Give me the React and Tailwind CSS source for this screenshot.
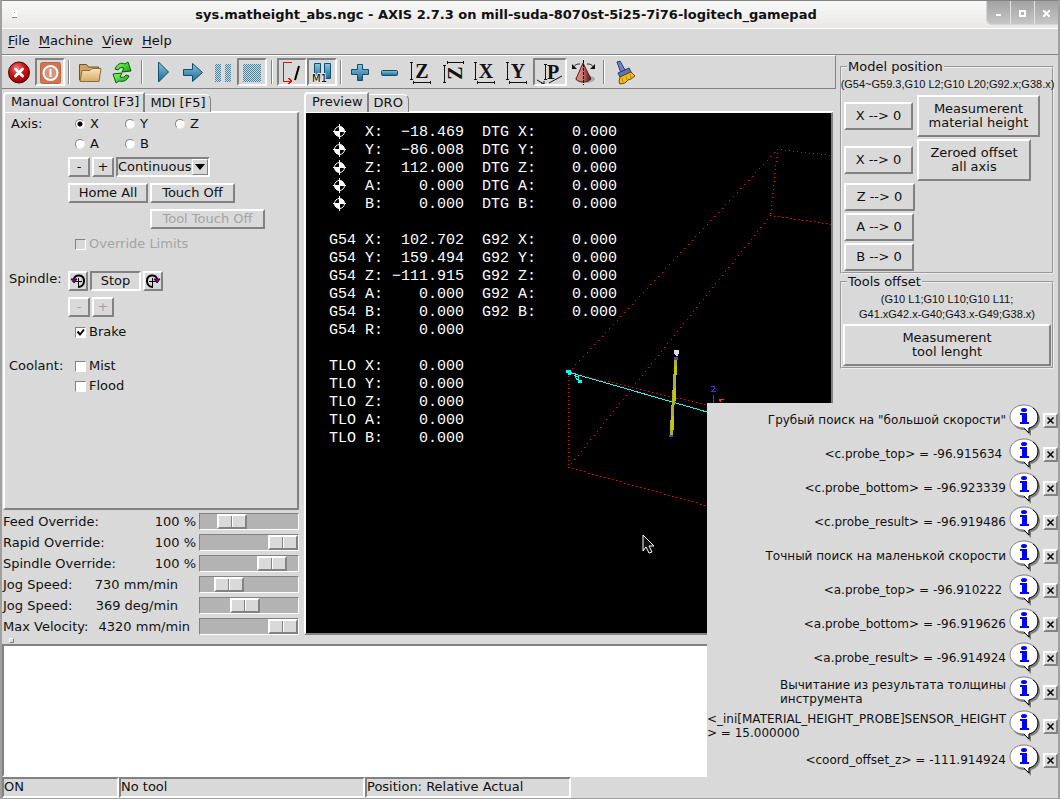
import { useState } from 'react'

const raisedColors = 'border-t-white border-l-white border-r-[#828282] border-b-[#828282]'
const raised = `border-2 ${raisedColors}`
const sunken = 'border-2 border-t-[#828282] border-l-[#828282] border-r-white border-b-white'

function Gradients() {
  return (
    <svg className="absolute size-0" aria-hidden="true">
      <defs>
        <linearGradient id="blue" x1="0" y1="0" x2="0" y2="1">
          <stop offset="0" stopColor="#8ec3dc" />
          <stop offset="1" stopColor="#176a92" />
        </linearGradient>
        <radialGradient id="red" cx="0.4" cy="0.3" r="0.7">
          <stop offset="0" stopColor="#f08080" />
          <stop offset="0.5" stopColor="#d01515" />
          <stop offset="1" stopColor="#960000" />
        </radialGradient>
        <linearGradient id="folder" x1="0" y1="0" x2="0" y2="1">
          <stop offset="0" stopColor="#f8e3b8" />
          <stop offset="1" stopColor="#d6ac68" />
        </linearGradient>
        <linearGradient id="green" x1="0" y1="0" x2="1" y2="1">
          <stop offset="0" stopColor="#8cff6a" />
          <stop offset="1" stopColor="#0aa80a" />
        </linearGradient>
        <linearGradient id="cone" x1="0" y1="0" x2="1" y2="0">
          <stop offset="0" stopColor="#e88d84" />
          <stop offset="0.4" stopColor="#d8776e" />
          <stop offset="1" stopColor="#3c1512" />
        </linearGradient>
        <pattern id="dither" width="2" height="2" patternUnits="userSpaceOnUse">
          <rect width="2" height="2" fill="#d4dde1" />
          <rect width="1" height="1" fill="#3a82a6" />
          <rect x="1" y="1" width="1" height="1" fill="#3a82a6" />
        </pattern>
      </defs>
    </svg>
  )
}

function Icon({ children }) {
  return (
    <svg width="26" height="26" viewBox="0 0 26 26" fill="none" className="shrink-0" aria-hidden="true">
      {children}
    </svg>
  )
}

function ViewLetter({ letter }) {
  return (
    <Icon>
      <path d="M3.500 3v18M2 3.500h3M2 20.500h3M5 23.500h18M5.500 22v3M22.500 22v3" stroke="#111" shapeRendering="crispEdges" />
      <text x="14" y="19" textAnchor="middle" fontFamily="Liberation Serif, serif" fontSize="20" fontWeight="700" fill="#111">
        {letter}
      </text>
    </Icon>
  )
}

const icons = {
  estop: (
    <Icon>
      <circle cx="13" cy="13.500" r="10.500" fill="url(#red)" stroke="#3d0000" />
      <path d="M9.500 10l7 7M16.500 10l-7 7" stroke="#fff" strokeWidth="3" strokeLinecap="round" />
    </Icon>
  ),
  power: (
    <Icon>
      <rect x="3.500" y="3.500" width="20" height="21" rx="2" fill="#d17452" stroke="#c0633f" />
      <circle cx="13.500" cy="14" r="7" fill="#dc9379" stroke="#fff" strokeWidth="2" />
      <path d="M13.500 10v8" stroke="#fff" strokeWidth="2" />
    </Icon>
  ),
  open: (
    <Icon>
      <path d="M3.500 21V5.500h7l2 2.500h10v13z" fill="#cba565" stroke="#6b5529" />
      <path d="M4 22.500l2-11h8l2-2h9l-2 13z" fill="url(#folder)" stroke="#8a6c38" />
    </Icon>
  ),
  reload: (
    <Icon>
      <path d="M7 10C9 5 13 3 17 5l3-2 3 9-9 1 2-4c-3-1-5 0-6 2z" fill="url(#green)" stroke="#0b5a0b" />
      <path d="M21 17c-2 5-6 6-10 5l-3 2-3-9 9-1-2 4c3 1 5 0 6-2z" fill="url(#green)" stroke="#0b5a0b" />
    </Icon>
  ),
  run: (
    <Icon>
      <path d="M9.500 3v20l10-10z" fill="url(#blue)" stroke="#114d6e" />
    </Icon>
  ),
  step: (
    <Icon>
      <path d="M4.500 10.500h9v-6l10 9-10 9v-6h-9z" fill="url(#blue)" stroke="#114d6e" />
    </Icon>
  ),
  pause: (
    <Icon>
      <path d="M6 5h6v18H6zM16 5h6v18h-6z" fill="url(#dither)" />
    </Icon>
  ),
  stop: (
    <Icon>
      <path d="M4 5h18v18H4z" fill="url(#dither)" />
    </Icon>
  ),
  skipLines: (
    <Icon>
      <path d="M13 3.500H4.500v18.500h8M9.500 19l3 3-3 3" stroke="#f00" shapeRendering="crispEdges" />
      <path d="M16 21l4-14" stroke="#000" strokeWidth="2" />
    </Icon>
  ),
  optionalStop: (
    <Icon>
      <path d="M5.500 4.500h6v15h-6zM15.500 4.500h6v15h-6z" fill="url(#blue)" stroke="#114d6e" />
      <text x="3" y="23" fontFamily="DejaVu Sans, sans-serif" fontSize="10" fill="#000" stroke="#e8e8e8" strokeWidth="2" paintOrder="stroke">
        M1
      </text>
    </Icon>
  ),
  zoomIn: (
    <Icon>
      <path d="M10.500 5.500h5v5h6v5h-6v6h-5v-6h-6v-5h6z" fill="url(#blue)" stroke="#114d6e" strokeLinejoin="round" />
    </Icon>
  ),
  zoomOut: (
    <Icon>
      <rect x="4.500" y="11.500" width="16" height="5" rx="1" fill="url(#blue)" stroke="#114d6e" />
    </Icon>
  ),
  viewZ: <ViewLetter letter="Z" />,
  viewZ2: (
    <Icon>
      <path d="M4.500 6v18M3 6.500h3M3 23.500h3M7 3.500h17M7.500 2v3M23.500 2v3" stroke="#111" shapeRendering="crispEdges" />
      <text x="-14" y="22" transform="rotate(-90)" textAnchor="middle" fontFamily="Liberation Serif, serif" fontSize="20" fontWeight="700" fill="#111">
        Z
      </text>
    </Icon>
  ),
  viewX: <ViewLetter letter="X" />,
  viewY: <ViewLetter letter="Y" />,
  viewP: (
    <Icon>
      <path d="M8.500 5v15M7 5.500h3M7 20.500h3" stroke="#111" shapeRendering="crispEdges" />
      <path d="M0 21l7 4M4 25h3v-3M12 24l13-7" stroke="#111" />
      <text x="16" y="20" textAnchor="middle" fontFamily="Liberation Serif, serif" fontSize="20" fontWeight="700" fill="#111">
        P
      </text>
    </Icon>
  ),
  rotate: (
    <Icon>
      <ellipse cx="15" cy="20" rx="10" ry="4" fill="#aaa" />
      <path d="M13 4L6 20c3 4 12 4 15 0z" fill="url(#cone)" stroke="#5a2420" />
      <path d="M13.500 1v25" stroke="#000" strokeDasharray="3 1" shapeRendering="crispEdges" />
      <path d="M3 9c2-4 5-4 7-4M24 9c-2-4-5-4-7-4" stroke="#111" />
      <path d="M2 5v5h5zM25 5v5h-5z" fill="#111" />
    </Icon>
  ),
  clear: (
    <Icon>
      <path d="M5 3l3-1 5 9-4 3z" fill="#6f86cf" stroke="#27366b" />
      <path d="M6 14l11-5 2 4-11 5z" fill="#5b72bd" stroke="#27366b" />
      <path d="M8 18l11-5 4 4-4 3-3 1-3 3-5 1-1-2z" fill="#f4bd1a" stroke="#6b4b06" />
      <path d="M10 19l1 4M14 17l1 4M18 15l1 4" stroke="#b98508" />
    </Icon>
  ),
}

const tools = [
  { icon: 'estop', label: 'Emergency stop', width: 'w-8' },
  { icon: 'power', label: 'Machine power', width: 'w-[30px]', pressed: true },
  { sep: 'w-2' },
  { icon: 'open', label: 'Open file', width: 'w-8' },
  { icon: 'reload', label: 'Reload file', width: 'w-8' },
  { sep: 'w-[10px]' },
  { icon: 'run', label: 'Run', width: 'w-[30px]' },
  { icon: 'step', label: 'Step', width: 'w-[30px]' },
  { icon: 'pause', label: 'Pause', width: 'w-[30px]' },
  { icon: 'stop', label: 'Stop program', width: 'w-[30px]', pressed: true },
  { sep: 'w-[10px]' },
  { icon: 'skipLines', label: 'Skip lines', width: 'w-[30px]', pressed: true },
  { icon: 'optionalStop', label: 'Optional stop', width: 'w-[30px]', pressed: true },
  { sep: 'w-2' },
  { icon: 'zoomIn', label: 'Zoom in', width: 'w-[30px]' },
  { icon: 'zoomOut', label: 'Zoom out', width: 'w-[30px]' },
  { icon: 'viewZ', label: 'Top view', width: 'w-8' },
  { icon: 'viewZ2', label: 'Rotated top view', width: 'w-8' },
  { icon: 'viewX', label: 'Side view', width: 'w-8' },
  { icon: 'viewY', label: 'Front view', width: 'w-8' },
  { icon: 'viewP', label: 'Perspective view', width: 'w-[34px]', pressed: true },
  { icon: 'rotate', label: 'Rotate', width: 'w-8' },
  { sep: 'w-[10px]' },
  { icon: 'clear', label: 'Clear plot', width: 'w-8' },
]

function Toolbar() {
  return (
    <div className="flex h-[34px] shrink-0 items-center border-t border-r border-b border-t-white border-r-[#828282] border-b-[#828282] pl-px">
      {tools.map((t, i) =>
        t.sep ? (
          <div key={i} className={`flex h-6 shrink-0 justify-center ${t.sep}`}>
            <div className="w-[2px] border-l border-r border-l-[#828282] border-r-white" />
          </div>
        ) : (
          <button
            key={i}
            aria-label={t.label}
            className={`flex h-7 shrink-0 items-center justify-center overflow-hidden ${t.width} ${t.pressed ? sunken : ''}`}
          >
            {icons[t.icon]}
          </button>
        )
      )}
    </div>
  )
}

function Button({ children, className = '', ...props }) {
  return (
    <button className={`flex items-center justify-center disabled:text-[#a3a3a3] ${raised} ${className}`} {...props}>
      {children}
    </button>
  )
}

function Check({ label, ...props }) {
  return (
    <label className={`flex h-5 items-center gap-[3px] ${props.disabled ? 'text-[#a3a3a3]' : ''}`}>
      <span className="relative flex">
        <input
          type="checkbox"
          className="peer size-[11px] appearance-none border border-t-[#828282] border-l-[#828282] border-r-white border-b-white bg-white disabled:bg-[#d9d9d9]"
          {...props}
        />
        <svg className="pointer-events-none absolute inset-0 hidden peer-checked:block" width="11" height="11" fill="none" aria-hidden="true">
          <path d="M2.500 4.500l2.500 3 4-5" stroke="#000" strokeWidth="2" />
        </svg>
      </span>
      {label}
    </label>
  )
}

function AxisRadios() {
  const [axis, setAxis] = useState('X')
  return (
    <div className="grid grid-cols-[50px_50px_50px] pl-[7px]">
      {['X', 'Y', 'Z', 'A', 'B'].map(a => (
        <label key={a} className="flex h-5 items-center gap-[5px]">
          <input
            type="radio"
            name="axis"
            checked={axis === a}
            onChange={() => setAxis(a)}
            className="size-[10px] appearance-none rounded-full border border-t-[#828282] border-l-[#828282] border-r-[#eeeeee] border-b-[#eeeeee] bg-white checked:bg-[radial-gradient(circle,#000_2px,#fff_3px)]"
          />
          {a}
        </label>
      ))}
    </div>
  )
}

function SpindleIcon({ flip }) {
  return (
    <svg width="16" height="16" viewBox="0 0 16 16" fill="none" className={flip ? '-scale-x-100' : ''} aria-hidden="true">
      <path d="M4 6c1-5 10-5 10 2 0 4-3 6-6 6" stroke="#000" strokeWidth="2" />
      <path d="M8.500 5v8M5 8.500h7" stroke="#000" shapeRendering="crispEdges" />
      <path d="M1 6h6L4 10z" fill="#800080" stroke="#40003f" />
    </svg>
  )
}

function Tabs({ tabs }) {
  return (
    <div role="tablist" className="flex h-5 shrink-0 items-end">
      <button
        role="tab"
        aria-selected="true"
        className="z-10 flex h-5 items-center rounded-tl border-t-2 border-l-2 border-r-2 border-t-white border-l-white border-r-[#828282] pr-[4px] pb-[3px] pl-[6px]"
      >
        {tabs[0]}
      </button>
      <button
        role="tab"
        aria-selected="false"
        className="flex h-[18px] items-center rounded-tr-md border-t border-r border-t-white border-r-[#828282] px-[5px] pb-px"
      >
        {tabs[1]}
      </button>
      <div className="h-px flex-1 bg-white" />
    </div>
  )
}

function ManualControl() {
  return (
    <div className={`flex flex-1 flex-col ${raised} border-t pt-px pl-[3px]`}>
      <div className="flex">
        <span className="w-[60px] pl-[3px] leading-5">Axis:</span>
        <div className="flex flex-col items-start">
          <AxisRadios />
          <div className="mt-[3px] flex h-5 gap-[2px]">
            <Button className="w-[22px]">-</Button>
            <Button className="w-[22px]">+</Button>
            <div className={`relative flex w-[94px] ${sunken}`}>
              <select aria-label="Jog increment" className="w-full appearance-none leading-4 outline-none">
                <option>Continuous</option>
              </select>
              <span className={`pointer-events-none absolute inset-y-0 right-0 flex w-4 items-center justify-center border bg-[#d9d9d9] ${raisedColors}`}>
                <svg width="10" height="6" aria-hidden="true">
                  <path d="M0 0h10L5 6z" fill="#000" />
                </svg>
              </span>
            </div>
          </div>
          <div className="mt-[6px] grid grid-cols-[auto_auto_auto] justify-start gap-x-[2px] gap-y-[6px]">
            <Button className="h-5 w-20">Home All</Button>
            <Button className="h-5 w-[85px]">Touch Off</Button>
            <Button className="col-span-2 col-start-2 h-5 w-[115px]" disabled>
              Tool Touch Off
            </Button>
          </div>
          <div className="mt-[5px] pl-[7px]">
            <Check label="Override Limits" disabled />
          </div>
        </div>
      </div>
      <div className="mt-[17px] flex">
        <span className="w-[60px] pl-px leading-4">Spindle:</span>
        <div>
          <div className="flex h-5 gap-[2px]">
            <Button className="w-5" aria-label="Spindle counterclockwise">
              <SpindleIcon />
            </Button>
            <button className={`w-[51px] leading-4 ${sunken}`}>Stop</button>
            <Button className="w-5" aria-label="Spindle clockwise">
              <SpindleIcon flip />
            </Button>
          </div>
          <div className="mt-[6px] flex h-5 gap-[2px]">
            <Button className="w-[22px]" disabled>-</Button>
            <Button className="w-[22px]" disabled>+</Button>
          </div>
          <div className="mt-[5px] pl-[7px]">
            <Check label="Brake" defaultChecked />
          </div>
        </div>
      </div>
      <div className="mt-[14px] flex">
        <span className="w-[60px] pl-px leading-5">Coolant:</span>
        <div className="pl-[7px]">
          <Check label="Mist" />
          <Check label="Flood" />
        </div>
      </div>
    </div>
  )
}

const overrides = [
  { id: 'feed', label: 'Feed Override:', value: '100 %', pos: 25, align: 'text-right' },
  { id: 'rapid', label: 'Rapid Override:', value: '100 %', pos: 100, align: 'text-right' },
  { id: 'spindle', label: 'Spindle Override:', value: '100 %', pos: 84, align: 'text-right' },
  { id: 'jog-linear', label: 'Jog Speed:', value: '730 mm/min', pos: 21, align: 'pr-[18px] text-right' },
  { id: 'jog-angular', label: 'Jog Speed:', value: '369 deg/min', pos: 44, align: 'pr-[18px] text-right' },
  { id: 'velocity', label: 'Max Velocity:', value: '4320 mm/min', pos: 100, align: 'pr-[6px] text-right' },
]

function Overrides() {
  return (
    <div className="flex flex-col pt-px">
      {overrides.map(o => (
        <div key={o.id} className="flex h-[21px] items-center">
          <label htmlFor={o.id} className="whitespace-nowrap">{o.label}</label>
          <span className={`flex-1 whitespace-nowrap ${o.align}`}>{o.value}</span>
          <input
            id={o.id}
            type="range"
            defaultValue={o.pos}
            className="ml-[3px] h-[17px] w-[100px] appearance-none border border-t-[#828282] border-l-[#828282] border-r-white border-b-white bg-[#b3b3b3] [&::-webkit-slider-thumb]:h-[15px] [&::-webkit-slider-thumb]:w-[30px] [&::-webkit-slider-thumb]:appearance-none [&::-webkit-slider-thumb]:border-2 [&::-webkit-slider-thumb]:border-t-white [&::-webkit-slider-thumb]:border-r-[#828282] [&::-webkit-slider-thumb]:border-b-[#828282] [&::-webkit-slider-thumb]:border-l-white [&::-webkit-slider-thumb]:bg-[linear-gradient(90deg,#d9d9d9_12px,#828282_12px,#828282_13px,#fff_13px,#fff_14px,#d9d9d9_14px)]"
          />
        </div>
      ))}
    </div>
  )
}

const readout = [
  ['home', 'X', '−18.469', 'DTG', 'X'],
  ['home', 'Y', '−86.008', 'DTG', 'Y'],
  ['home', 'Z', '112.000', 'DTG', 'Z'],
  ['home', 'A', '0.000', 'DTG', 'A'],
  ['home', 'B', '0.000', 'DTG', 'B'],
  null,
  ['G54', 'X', '102.702', 'G92', 'X'],
  ['G54', 'Y', '159.494', 'G92', 'Y'],
  ['G54', 'Z', '−111.915', 'G92', 'Z'],
  ['G54', 'A', '0.000', 'G92', 'A'],
  ['G54', 'B', '0.000', 'G92', 'B'],
  ['G54', 'R', '0.000'],
  null,
  ['TLO', 'X', '0.000'],
  ['TLO', 'Y', '0.000'],
  ['TLO', 'Z', '0.000'],
  ['TLO', 'A', '0.000'],
  ['TLO', 'B', '0.000'],
]

function HomedIcon() {
  return (
    <svg width="13" height="15" viewBox="0 0 13 15" fill="none" className="ml-1 block" aria-hidden="true">
      <circle cx="6.500" cy="7.500" r="5" stroke="#fff" />
      <path d="M6.500 7.500V2.500a5 5 0 0 1 5 5zM6.500 7.500v5a5 5 0 0 1-5-5z" fill="#fff" />
      <path d="M6.500 0v15M0 7.500h13" stroke="#fff" shapeRendering="crispEdges" />
    </svg>
  )
}

function Readout() {
  return (
    <table className="relative w-[288px] table-fixed font-['Liberation_Mono',monospace] text-[15px] leading-[18px] text-white">
      <colgroup>
        <col className="w-9" />
        <col className="w-[18px]" />
        <col className="w-[81px]" />
        <col className="w-[54px]" />
        <col className="w-[18px]" />
        <col className="w-[81px]" />
      </colgroup>
      <tbody>
        {readout.map((r, i) => (
          <tr key={i} className="h-[18px]">
            {r && (
              <>
                <td className="p-0 align-top">{r[0] === 'home' ? <HomedIcon /> : r[0]}</td>
                <td className="p-0">{r[1]}:</td>
                <td className="p-0 text-right">{r[2]}</td>
                <td className="p-0 pl-[18px]">{r[3]}</td>
                <td className="p-0">{r[4] && `${r[4]}:`}</td>
                <td className="p-0 text-right">{r[4] && '0.000'}</td>
              </>
            )}
          </tr>
        ))}
      </tbody>
    </table>
  )
}

// one pixel dot every `step` pixels along the longer axis
function dotted([x1, y1, x2, y2], step = 4) {
  const length = Math.max(Math.abs(x2 - x1), Math.abs(y2 - y1))
  let d = ''
  for (let i = 0; i <= length; i += step) {
    const x = Math.round(x1 + ((x2 - x1) * i) / length)
    const y = Math.round(y1 + ((y2 - y1) * i) / length)
    d += `M${x} ${y}h1v1h-1z`
  }
  return d
}

const limits = [
  [262, 259, 471, 36],
  [262, 354, 464, 102],
  [471, 36, 525, 42],
  [471, 36, 464, 102],
  [464, 102, 525, 111],
  [262, 259, 262, 354],
  [262, 259, 410, 294],
  [262, 354, 410, 395],
]

function Scene() {
  return (
    <svg className="absolute inset-0 size-full" fill="none" shapeRendering="crispEdges" aria-hidden="true">
      {limits.map((line, i) => (
        <path key={i} d={dotted(line)} fill="#f00" />
      ))}
      {/* tool path */}
      <path d="M262 259L401 299" stroke="#0ff" />
      <path d="M260 257h5v5h-3v-2h-2zM272 267h4v3h-4z" fill="#0ff" />
      <path d="M266.500 260.500h3v2h-2M269.500 263.500h3v3h-2z" stroke="#0ff" />
      {/* tool */}
      <path d="M370 246L365 323" stroke="#a9b428" strokeWidth="3" />
      <path d="M369 253v9M368 275v13M366 303v14" stroke="#c8c400" strokeWidth="3" />
      <path d="M368 244h4v3h-4zM363 322h4v2h-4z" fill="#7038b0" />
      <path d="M368 237h5v3l-2 4-3-4z" fill="#ddd" />
      <path d="M405 273.500h3.500v2l-3 3h4" stroke="#33f" />
      <path d="M407.500 282v10" stroke="#33f" />
      <path d="M413 286h5v1h-3v2h-1z" fill="#f33" />
    </svg>
  )
}

function Pointer() {
  return (
    <svg className="absolute top-[421px] left-[336px]" width="14" height="20" aria-hidden="true">
      <path d="M1 1v16l3-4 3 6 3-1-3-6h5z" fill="#111" stroke="#fff" />
    </svg>
  )
}

function Preview() {
  return (
    <div className={`relative flex-1 overflow-hidden bg-black ${raised} border-t`}>
      <Scene />
      <div className="pt-[11px] pl-[23px]">
        <Readout />
      </div>
      <Pointer />
    </div>
  )
}

function OffsetPanels() {
  return (
    <aside className="w-[222px] shrink-0 py-1 pr-[4px] pl-[4px]">
      <fieldset className="border-2 border-[#ececec] pr-px pb-px pl-[2px] [border-style:groove]">
        <legend className="ml-[3px] px-px leading-4">Model position</legend>
        <p className="-mx-1 text-center font-['Liberation_Sans',sans-serif] text-[11px] leading-[18px] whitespace-nowrap">
          (G54~G59.3,G10 L2;G10 L20;G92.x;G38.x)
        </p>
        <div className="mt-[2px] flex flex-col items-start gap-[2px]">
          <div className="flex items-center gap-[4px]">
            <Button className="h-7 w-[69px]">X --&gt; 0</Button>
            <Button className="h-[42px] w-[123px] leading-[14px]">Measumerent<br />material height</Button>
          </div>
          <div className="flex items-center gap-[4px]">
            <Button className="h-7 w-[69px]">X --&gt; 0</Button>
            <Button className="h-[42px] w-[114px] leading-[14px]">Zeroed offset<br />all axis</Button>
          </div>
          <Button className="h-7 w-[71px]">Z --&gt; 0</Button>
          <Button className="h-7 w-[70px]">A --&gt; 0</Button>
          <Button className="h-7 w-[70px]">B --&gt; 0</Button>
        </div>
      </fieldset>
      <fieldset className="border-2 border-[#ececec] px-px pb-px [border-style:groove]">
        <legend className="ml-[4px] px-px leading-4">Tools offset</legend>
        <p className="py-[2px] text-center font-['Liberation_Sans',sans-serif] text-[11px] leading-[15px] whitespace-nowrap">
          (G10 L1;G10 L10;G10 L11;<br />G41.xG42.x-G40;G43.x-G49;G38.x)
        </p>
        <Button className="h-[42px] w-full leading-[14px]">Measumerent<br />tool lenght</Button>
      </fieldset>
    </aside>
  )
}

const messages = [
  'Грубый поиск на "большой скорости"',
  '<c.probe_top> = -96.915634 ',
  '<c.probe_bottom> = -96.923339',
  '<c.probe_result> = -96.919486',
  'Точный поиск на маленькой скорости',
  '<a.probe_top> = -96.910222 ',
  '<a.probe_bottom> = -96.919626',
  '<a.probe_result> = -96.914924',
  'Вычитание из результата толщины\nинструмента',
  '<_ini[MATERIAL_HEIGHT_PROBE]SENSOR_HEIGHT\n> = 15.000000',
  '<coord_offset_z> = -111.914924',
]

function InfoIcon() {
  return (
    <svg width="32" height="32" viewBox="0 0 32 32" aria-hidden="true">
      <path d="M17 3c8 0 14 5 14 12 0 6-4 10-9 11v6l-6-6C8 26 3 21 3 15 3 8 9 3 17 3z" fill="#828282" />
      <path d="M15 1c8 0 14 5 14 12 0 6-4 10-9 11v5l-5-5C7 24 1 19 1 13 1 6 7 1 15 1z" fill="#fff" stroke="#828282" />
      <path d="M24 4c3 2 5 5 5 9 0 6-4 10-9 11v5l-5-5" fill="none" stroke="#000" />
      <ellipse cx="15" cy="6" rx="3" ry="2" fill="#00f" />
      <path d="M11 9h7v9h2v2h-9v-2h2v-7h-2z" fill="#00f" />
    </svg>
  )
}

function Notifications() {
  const [items, setItems] = useState(messages)
  return (
    <ul className="absolute right-0 bottom-[21px] w-[351px] bg-[#d9d9d9] text-[12px]">
      {items.map(m => (
        <li key={m} className="flex h-[34px] items-center justify-end">
          <p className="leading-[14px] whitespace-pre">{m}</p>
          <span className="ml-[3px] shrink-0">
            <InfoIcon />
          </span>
          <button
            aria-label="Close"
            onClick={() => setItems(items.filter(x => x !== m))}
            className={`ml-[2px] flex size-[15px] shrink-0 items-center justify-center ${raised}`}
          >
            <svg width="9" height="9" fill="none" className="shrink-0" aria-hidden="true">
              <path d="M1.500 1.500l6 6M7.500 1.500l-6 6" stroke="#000" strokeWidth="1.500" />
            </svg>
          </button>
        </li>
      ))}
    </ul>
  )
}

function TitleBar() {
  return (
    <header className="flex h-7 shrink-0 items-start border-t border-t-[#828282] bg-linear-to-b from-[#f8f8f8] to-[#e9e8e6]">
      <div className="flex w-6 justify-center pt-[9px]">
        <div className="h-[8px] w-[5px] border-b border-b-[#828282] bg-white pt-[2px] pl-[2px]">
          <div className="size-px bg-[#828282]" />
        </div>
      </div>
      <h1 className="flex-1 text-center text-[13px] leading-[27px] font-bold whitespace-nowrap">
        sys.matheight_abs.ngc - AXIS 2.7.3 on mill-suda-8070st-5i25-7i76-logitech_gamepad
      </h1>
      <div className="flex h-6 w-[72px] divide-x divide-[#e4e4e4] overflow-hidden rounded-bl-md border-b border-l border-[#d5d5d5] bg-linear-to-b from-[#a2a2a2] to-[#c6c6c6]">
        <button aria-label="Minimize" className="flex flex-1 justify-center pt-[13px]">
          <span className="h-[2px] w-[5px] bg-white" />
        </button>
        <button aria-label="Maximize" className="flex flex-1 justify-center pt-[9px]">
          <span className="size-[7px] border-2 border-white" />
        </button>
        <button aria-label="Close window" className="flex flex-1 justify-center pt-[9px]">
          <svg width="7" height="7" fill="none" aria-hidden="true">
            <path d="M0 0l7 7M7 0L0 7" stroke="#fff" strokeWidth="2" />
          </svg>
        </button>
      </div>
    </header>
  )
}

function MenuBar() {
  return (
    <nav className="flex h-[27px] shrink-0 items-center gap-[9px] border-t border-b border-t-white border-b-[#828282] pb-px pl-[6px]">
      {['File', 'Machine', 'View', 'Help'].map(m => (
        <button key={m}>
          <span className="underline underline-offset-2">{m[0]}</span>
          {m.slice(1)}
        </button>
      ))}
    </nav>
  )
}

export default function App() {
  return (
    <div className="relative flex h-screen flex-col overflow-hidden border-r-2 border-b border-l-2 border-r-[#a0a0a0] border-b-[#a0a0a0] border-l-[#a0a0a0] bg-[#d9d9d9] font-['DejaVu_Sans',sans-serif] text-[13px] leading-4 text-[#111111]">
      <Gradients />
      <TitleBar />
      <MenuBar />
      <div className="flex min-h-0 flex-1">
        <div className="flex min-w-0 flex-1 flex-col">
          <Toolbar />
          <main className="flex min-h-0 flex-1 pt-[3px]">
            <section className="flex w-[297px] shrink-0 flex-col pb-px pl-px">
              <Tabs tabs={['Manual Control [F3]', 'MDI [F5]']} />
              <ManualControl />
              <Overrides />
            </section>
            <section className="ml-[5px] flex min-w-0 flex-1 flex-col pr-[3px] pb-[3px]">
              <Tabs tabs={['Preview', 'DRO']} />
              <Preview />
            </section>
          </main>
          <div className="h-[6px] shrink-0 pl-[7px]">
            <div className={`size-[5px] border ${raisedColors}`} />
          </div>
          <textarea aria-label="Program" readOnly className={`h-[133px] w-full shrink-0 resize-none bg-white ${sunken}`} />
          <footer className="flex h-[21px] shrink-0 leading-4">
            <div className={`w-[117px] ${sunken}`}>ON</div>
            <div className={`w-[246px] ${sunken}`}>No tool</div>
            <div className={`w-[206px] ${sunken}`}>Position: Relative Actual</div>
          </footer>
        </div>
        <OffsetPanels />
      </div>
      <Notifications />
    </div>
  )
}
